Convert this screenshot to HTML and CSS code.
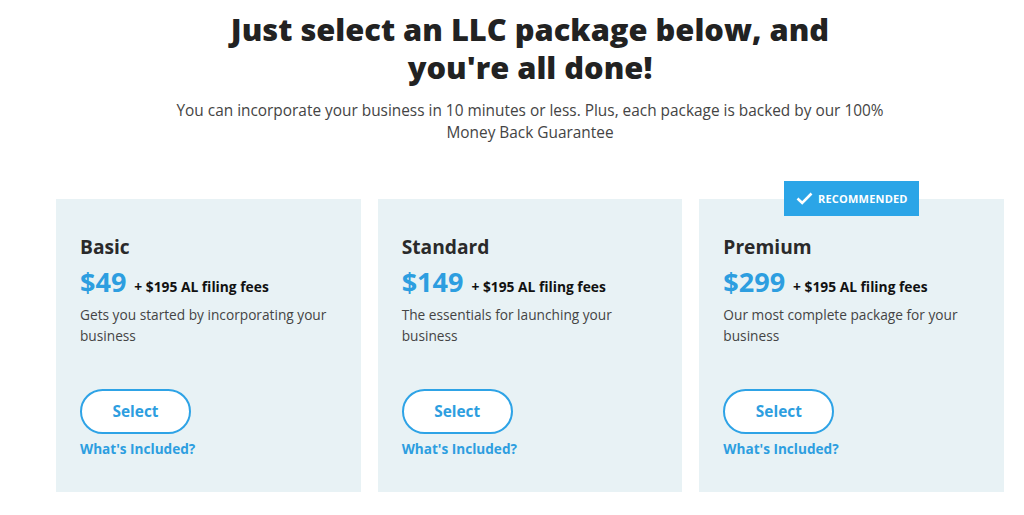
FILE: index.html
```html
<!DOCTYPE html>
<html lang="en">
<head>
    <meta charset="UTF-8">
    <meta name="viewport" content="width=device-width, initial-scale=1.0">
    <title>LLC Packages</title>
    <link rel="stylesheet" href="styles.css">
</head>
<body>

<div class="wrap">
    <div class="intro">
        <h1>Just select an LLC package below, and<br>you're all done!</h1>
        <p>You can incorporate your business in 10 minutes or less. Plus, each package is backed by our 100%<br>Money Back Guarantee</p>
    </div>

    <div class="plans">
        <div class="plan">
            <h3>Basic</h3>
            <div class="price"><span class="amount">$49</span> <span class="fees">+ $195 AL filing fees</span></div>
            <p class="desc">Gets you started by incorporating your business</p>
            <a class="select-btn" href="#">Select</a>
            <a class="included" href="#">What's Included?</a>
        </div>

        <div class="plan">
            <h3>Standard</h3>
            <div class="price"><span class="amount">$149</span> <span class="fees">+ $195 AL filing fees</span></div>
            <p class="desc">The essentials for launching your business</p>
            <a class="select-btn" href="#">Select</a>
            <a class="included" href="#">What's Included?</a>
        </div>

        <div class="plan recommended">
            <div class="badge">
                <svg width="17" height="13" viewBox="0 0 17 13"><path d="M1.5 6.5 L6.2 11 L15.5 1.5" fill="none" stroke="#fff" stroke-width="2.6"/></svg>
                RECOMMENDED
            </div>
            <h3>Premium</h3>
            <div class="price"><span class="amount">$299</span> <span class="fees">+ $195 AL filing fees</span></div>
            <p class="desc">Our most complete package for your business</p>
            <a class="select-btn" href="#">Select</a>
            <a class="included" href="#">What's Included?</a>
        </div>
    </div>
</div>

</body>
</html>
```

FILE: styles.css
```css
body {
    font-family: "Open Sans", Arial, sans-serif;
    background-color: #fff;
    margin: 0;
    padding: 0;
    color: #222;
}

.wrap {
    width: 948px;
    margin-left: 56px;
}

.intro {
    text-align: center;
}

h1 {
    font-size: 30.8px;
    font-weight: 800;
    line-height: 38px;
    color: #222;
    margin: 10px 0 0;
}

.intro p {
    font-size: 15.4px;
    line-height: 22px;
    color: #444;
    margin: 14px 0 0;
}

.plans {
    display: flex;
    gap: 17px;
    margin-top: 55px;
}

.plan {
    position: relative;
    flex: 1 1 0;
    min-width: 0;
    background-color: #e8f2f5;
    padding: 34px 24px 34px;
    display: flex;
    flex-direction: column;
    align-items: flex-start;
}

.plan h3 {
    font-size: 19.2px;
    font-weight: 700;
    color: #2a2a2a;
    margin: 0;
    line-height: 28px;
}

.price {
    margin-top: 3px;
    display: flex;
    align-items: baseline;
    gap: 8px;
}

.amount {
    font-size: 27px;
    font-weight: 700;
    color: #2d9ee0;
    line-height: 36px;
}

.fees {
    font-size: 13.8px;
    font-weight: 700;
    color: #111;
}

.desc {
    font-size: 13.7px;
    line-height: 21px;
    color: #444;
    margin: 4px 0 0;
    height: 42px;
}

.select-btn {
    margin-top: 43px;
    box-sizing: border-box;
    width: 111px;
    height: 45px;
    border: 2px solid #2ea3e6;
    border-radius: 23px;
    background-color: #fff;
    color: #2d9ee0;
    font-size: 15.4px;
    font-weight: 700;
    text-decoration: none;
    display: flex;
    align-items: center;
    justify-content: center;
}

.included {
    margin-top: 5px;
    font-size: 13.6px;
    font-weight: 700;
    color: #2d9ee0;
    text-decoration: none;
}

.badge {
    position: absolute;
    top: -18px;
    left: 85px;
    width: 135px;
    height: 35px;
    background-color: #2ba5e7;
    color: #fff;
    font-size: 11px;
    font-weight: 700;
    letter-spacing: 0.2px;
    display: flex;
    align-items: center;
    justify-content: center;
    gap: 5px;
}
```
